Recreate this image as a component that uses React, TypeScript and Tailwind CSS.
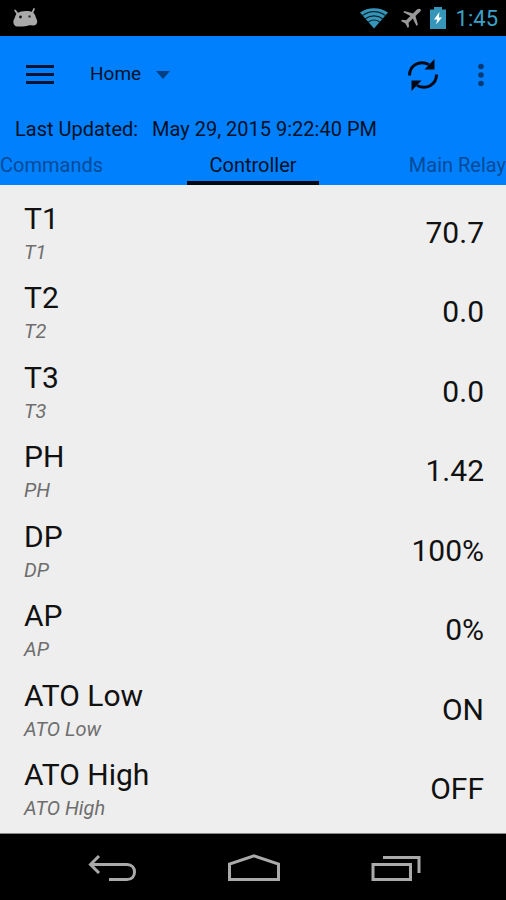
import React from 'react';

interface Reading {
  name: string;
  value: string;
}

const readings: Reading[] = [
  { name: 'T1', value: '70.7' },
  { name: 'T2', value: '0.0' },
  { name: 'T3', value: '0.0' },
  { name: 'PH', value: '1.42' },
  { name: 'DP', value: '100%' },
  { name: 'AP', value: '0%' },
  { name: 'ATO Low', value: 'ON' },
  { name: 'ATO High', value: 'OFF' },
];

const StatusBar: React.FC = () => (
  <div className="flex h-9 shrink-0 items-center justify-between bg-black pr-2 pl-3 text-[#3aa3c8]">
    <svg width="27" height="20" viewBox="0 0 27 20" aria-hidden="true">
      <path d="M3.200 2.500 6 6.500M22 1 20 5.500" stroke="#aaaaaa" strokeWidth="1.800" strokeLinecap="round" />
      <path
        d="M5.500 5C9 2.600 17 2.200 21 4.400c2.500 1.600 2.500 4.600 3.500 6.600 1.500 3 .5 5.500-2 6.300-2 .6-4-.3-6 .2-2.500.9-5 1-7.500 1-3 .3-6 .2-7-2-1.300-2.500-.5-4.500.7-6.500C3.500 8 3.500 6.300 5.500 5Z"
        fill="#aaaaaa"
      />
      <circle cx="8.500" cy="9" r="1.400" fill="#111111" />
      <circle cx="17.500" cy="8.500" r="1.200" fill="#333333" />
    </svg>
    <div className="flex items-center">
      <svg width="28" height="22" viewBox="0 0 28 22" fill="#3596ba" aria-hidden="true">
        <path d="M0 5.500C8-.3 20-.3 28 5.500L14 21.500Z" />
        <g fill="none" stroke="#0b2630" strokeWidth="1.100">
          <path d="M2.500 8.500c7-5.200 16-5.200 23 0" />
          <path d="M5 12c5.400-4.200 12.600-4.200 18 0" />
          <path d="M8 15.300c3.600-2.800 8.400-2.800 12 0" />
        </g>
      </svg>
      <svg className="ml-3" width="22" height="22" viewBox="0 0 22 22" fill="#999999" aria-hidden="true">
        <path d="M20.500 2.200c-1-1-2.700-.5-3.800.6L13 6.500 4.500 4 3.200 5.300l7.200 3.800-4.300 4.200-3.900-.5L1 14l4.400 2.400L7.800 21 9 19.800l-.4-4.100 4.200-4.200 3.700 7.400 1.400-1.400L15.500 9l3.900-3.800c1.200-1.100 2-2.200 1.100-3Z" />
      </svg>
      <svg className="ml-2" width="16" height="22" viewBox="0 0 16 22" aria-hidden="true">
        <path d="M4 0h8v2.500h4V22H0V2.500h4Z" fill="#3596ba" />
        <path d="M9.500 5 4 12.500h3.400L6 17.500l6-7H8.800Z" fill="#ffffff" />
      </svg>
      <span className="ml-2.5 text-[22px]">1:45</span>
    </div>
  </div>
);

const Toolbar: React.FC = () => (
  <div className="flex h-[77px] items-center pr-[15px] pl-[26px]">
    <button type="button" aria-label="Menu">
      <svg width="28" height="20" viewBox="0 0 28 20" fill="#001433">
        <path d="M0 0h28v3H0zM0 8h28v3H0zM0 16h28v3H0z" />
      </svg>
    </button>
    <div className="relative ml-9 flex items-center">
      <select
        aria-label="Controller profile"
        defaultValue="Home"
        className="appearance-none bg-transparent pr-7 text-[19px]"
      >
        <option>Home</option>
      </select>
      <svg
        className="pointer-events-none absolute right-0"
        width="14"
        height="8"
        viewBox="0 0 14 8"
        fill="#063f80"
        aria-hidden="true"
      >
        <path d="M0 0h14L7 8Z" />
      </svg>
    </div>
    <button type="button" aria-label="Refresh" className="ml-auto">
      <svg width="32" height="32" viewBox="0 0 32 32">
        <path
          d="M2.500 16.500C2.500 7 12 .5 22 5.500M29.500 15.500c0 9.500-9.500 16-19.500 11"
          fill="none"
          stroke="#000814"
          strokeWidth="3"
        />
        <path d="M27.500 0v10.500H17.500ZM4.500 32V21.500h10Z" fill="#000814" />
      </svg>
    </button>
    <button type="button" aria-label="More options" className="ml-8 flex w-5 justify-center">
      <svg width="6" height="24" viewBox="0 0 6 24" fill="#063a75">
        <circle cx="3" cy="3.500" r="2.800" />
        <circle cx="3" cy="12" r="2.800" />
        <circle cx="3" cy="20.500" r="2.800" />
      </svg>
    </button>
  </div>
);

const Tabs: React.FC = () => (
  <div role="tablist" className="flex h-10 overflow-hidden text-xl leading-8 whitespace-nowrap">
    <button type="button" role="tab" aria-selected="false" className="flex-1 pt-1 pb-1 text-left text-[#064b98]">
      Commands
    </button>
    <button type="button" role="tab" aria-selected="true" className="border-b-4 border-[#000814] px-[22px] pt-1">
      Controller
    </button>
    <button type="button" role="tab" aria-selected="false" className="flex-1 pt-1 pb-1 text-right text-[#064b98]">
      Main Relay
    </button>
  </div>
);

const ReadingRow: React.FC<Reading> = ({ name, value }) => (
  <li className="flex flex-1 items-center justify-between pr-[22px] pl-6">
    <div>
      <p className="text-[30px] leading-[38px]">{name}</p>
      <p className="text-xl leading-7 text-[#6e6e6e] italic">{name}</p>
    </div>
    <span className="text-[30px] leading-9">{value}</span>
  </li>
);

const NavBar: React.FC = () => (
  <nav className="flex h-[67px] shrink-0 items-center justify-center gap-[90px] border-t border-[#8a8a8a] bg-black pt-1 pl-0.5">
    <button type="button" aria-label="Back">
      <svg width="50" height="30" viewBox="0 0 50 30" fill="none" stroke="#aaaaaa" strokeWidth="3">
        <path d="M4 10.500h36c10 0 10 15 0 15H22" />
        <path d="m12 2-8.500 8.500L12 19" />
      </svg>
    </button>
    <button type="button" aria-label="Home">
      <svg width="54" height="30" viewBox="0 0 54 30" fill="none" stroke="#aaaaaa" strokeWidth="3">
        <path d="M2.500 25.500V10L27 1.800 51.500 10v15.500Z" />
      </svg>
    </button>
    <button type="button" aria-label="Recent apps">
      <svg width="50" height="30" viewBox="0 0 50 30" fill="none" stroke="#aaaaaa" strokeWidth="3">
        <path d="M2 10.500h37.500v15H2ZM12 3.500h36V19" />
      </svg>
    </button>
  </nav>
);

const App: React.FC = () => {
  return (
    <div className="flex min-h-screen flex-col bg-[#eeeeee] font-[Roboto,sans-serif] text-[#111111]">
      <StatusBar />
      <header className="shrink-0 bg-[#0080fc] text-[#001126]">
        <Toolbar />
        <p className="pl-[15px] text-xl leading-8">
          Last Updated:<span className="ml-3.5">May 29, 2015 9:22:40 PM</span>
        </p>
        <Tabs />
      </header>
      <ul className="flex flex-1 flex-col pt-2 pb-1">
        {readings.map((reading) => (
          <ReadingRow key={reading.name} {...reading} />
        ))}
      </ul>
      <NavBar />
    </div>
  );
};

export default App;
